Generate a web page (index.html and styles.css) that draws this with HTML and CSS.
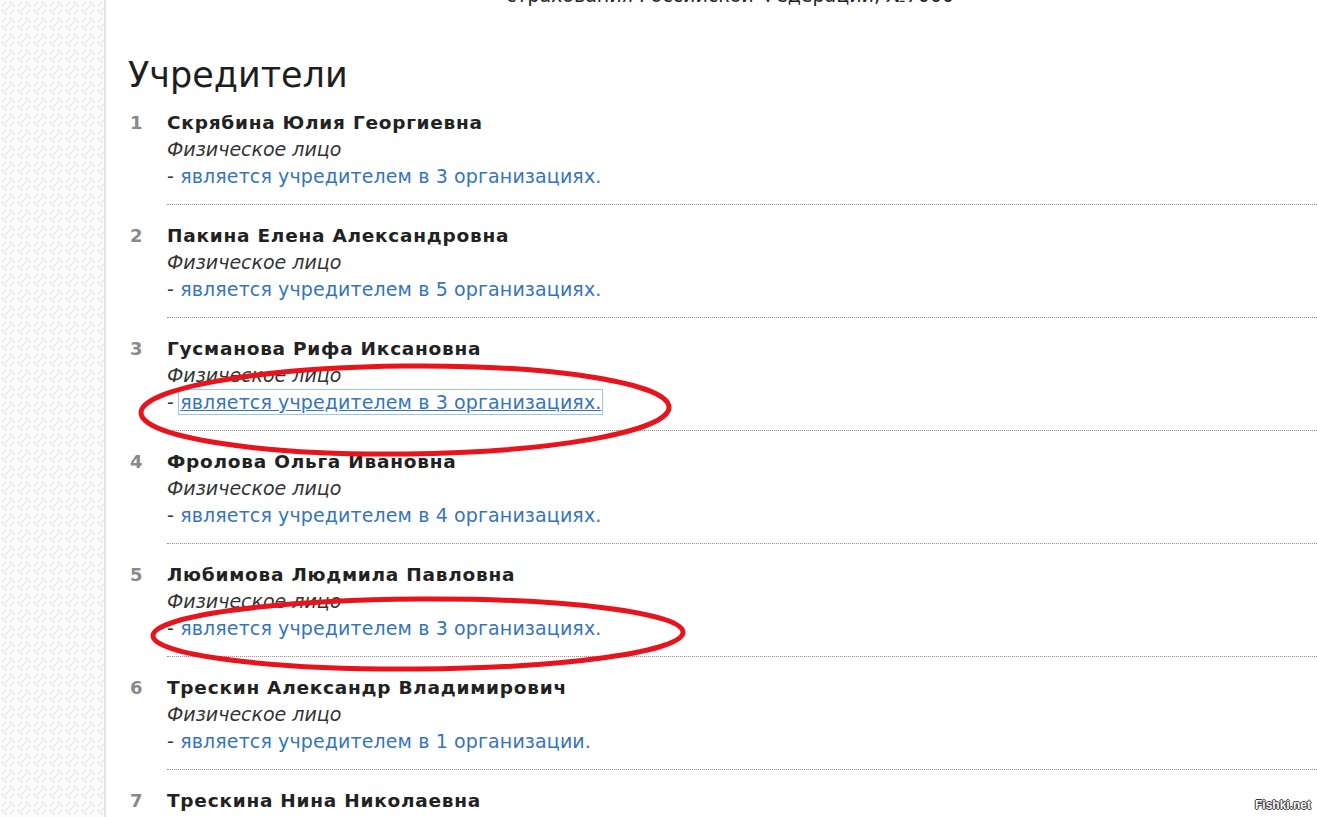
FILE: index.html
```html
<!DOCTYPE html>
<html lang="ru">
<head>
    <meta charset="UTF-8">
    <title>Учредители</title>
    <link rel="stylesheet" href="styles.css">
</head>
<body>
<div class="page">
    <aside class="side">
        <svg class="weave" width="100%" height="100%">
            <defs>
                <pattern id="weave" width="16" height="16" patternUnits="userSpaceOnUse">
                    <g stroke="#eeeeee" stroke-width="2.2" stroke-linecap="round" fill="none">
                        <path d="M2 6 L6 2 M6 10 L10 6 M10 14 L14 10"/>
                        <path d="M10 2 L14 6 M2 10 L6 14"/>
                    </g>
                </pattern>
            </defs>
            <rect width="100%" height="100%" fill="url(#weave)"/>
        </svg>
    </aside>
    <main class="content">
        <p class="prev-line">страхования Российской Федерации, №7000</p>
        <h2 class="title">Учредители</h2>
        <ol class="founders">
            <li class="founder">
                <span class="num">1</span>
                <div class="info">
                    <div class="name">Скрябина Юлия Георгиевна</div>
                    <div class="kind">Физическое лицо</div>
                    <div class="org">- <a href="#">является учредителем в 3 организациях.</a></div>
                </div>
            </li>
            <li class="founder">
                <span class="num">2</span>
                <div class="info">
                    <div class="name">Пакина Елена Александровна</div>
                    <div class="kind">Физическое лицо</div>
                    <div class="org">- <a href="#">является учредителем в 5 организациях.</a></div>
                </div>
            </li>
            <li class="founder">
                <span class="num">3</span>
                <div class="info">
                    <div class="name">Гусманова Рифа Иксановна</div>
                    <div class="kind">Физическое лицо</div>
                    <div class="org">- <a href="#" class="focused">является учредителем в 3 организациях.</a></div>
                </div>
            </li>
            <li class="founder">
                <span class="num">4</span>
                <div class="info">
                    <div class="name">Фролова Ольга Ивановна</div>
                    <div class="kind">Физическое лицо</div>
                    <div class="org">- <a href="#">является учредителем в 4 организациях.</a></div>
                </div>
            </li>
            <li class="founder">
                <span class="num">5</span>
                <div class="info">
                    <div class="name">Любимова Людмила Павловна</div>
                    <div class="kind">Физическое лицо</div>
                    <div class="org">- <a href="#">является учредителем в 3 организациях.</a></div>
                </div>
            </li>
            <li class="founder">
                <span class="num">6</span>
                <div class="info">
                    <div class="name">Трескин Александр Владимирович</div>
                    <div class="kind">Физическое лицо</div>
                    <div class="org">- <a href="#">является учредителем в 1 организации.</a></div>
                </div>
            </li>
            <li class="founder">
                <span class="num">7</span>
                <div class="info">
                    <div class="name">Трескина Нина Николаевна</div>
                </div>
            </li>
        </ol>
    </main>
</div>

<!-- пометки красным поверх страницы -->
<svg class="marks" width="1317" height="817">
    <ellipse cx="405" cy="410" rx="264" ry="44" transform="rotate(-0.6 405 410)"/>
    <ellipse cx="418" cy="634" rx="265" ry="35" transform="rotate(-0.4 418 634)"/>
</svg>

<div class="watermark">Fishki.net</div>
</body>
</html>
```

FILE: styles.css
```css
html, body {
    margin: 0;
    height: 100%;
    overflow: hidden;
    background: #fff;
}

body {
    font-family: "DejaVu Sans", Verdana, sans-serif;
    color: #222;
}

.page {
    display: flex;
    height: 100%;
}

.side {
    width: 104px;
    flex: none;
    border-right: 2px solid #e2e2e2;
    background: #fcfcfc;
}

.weave {
    display: block;
}

.content {
    flex: 1;
    padding-left: 24px;
    min-width: 0;
}

.prev-line {
    margin: -15px 0 0;
    font-size: 19px;
    line-height: 20px;
    text-align: center;
    width: 1200px;
    color: #222;
}

.title {
    margin: 48px 0 0 -2px;
    font-size: 35px;
    font-weight: normal;
    line-height: 44px;
    color: #1e1e1e;
}

.founders {
    list-style: none;
    margin: 12px 0 0;
    padding: 0;
}

.founder {
    display: flex;
    font-size: 19px;
    line-height: 27px;
}

.founder > .num {
    width: 37px;
    flex: none;
    font-size: 18px;
    font-weight: bold;
    color: #8a8a8a;
}

.founder > .info {
    flex: 1;
    padding-bottom: 14px;
    margin-bottom: 17px;
    border-bottom: 1px dotted #8f8f8f;
    margin-right: -40px;
}

.founder .name {
    font-weight: bold;
    font-size: 18.5px;
    letter-spacing: 0.75px;
    color: #222;
}

.founder .kind {
    font-style: italic;
    color: #333;
}

.founder .org {
    color: #333;
    letter-spacing: 0.12px;
}

.founder .org a {
    color: #3574bd;
    text-decoration: none;
}

.founder .org a.focused {
    text-decoration: underline;
    outline: 1px solid #9ec4ee;
    outline-offset: 1px;
}

.marks {
    position: absolute;
    left: 0;
    top: 0;
    pointer-events: none;
}

.marks ellipse {
    fill: none;
    stroke: #e8131b;
    stroke-width: 5;
}

.watermark {
    position: absolute;
    right: 6px;
    bottom: 5px;
    font-family: "Liberation Sans", Arial, sans-serif;
    font-size: 12px;
    font-weight: bold;
    color: #fff;
    text-shadow: -1px 0 #333, 1px 0 #333, 0 -1px #333, 0 1px #333;
}
```
